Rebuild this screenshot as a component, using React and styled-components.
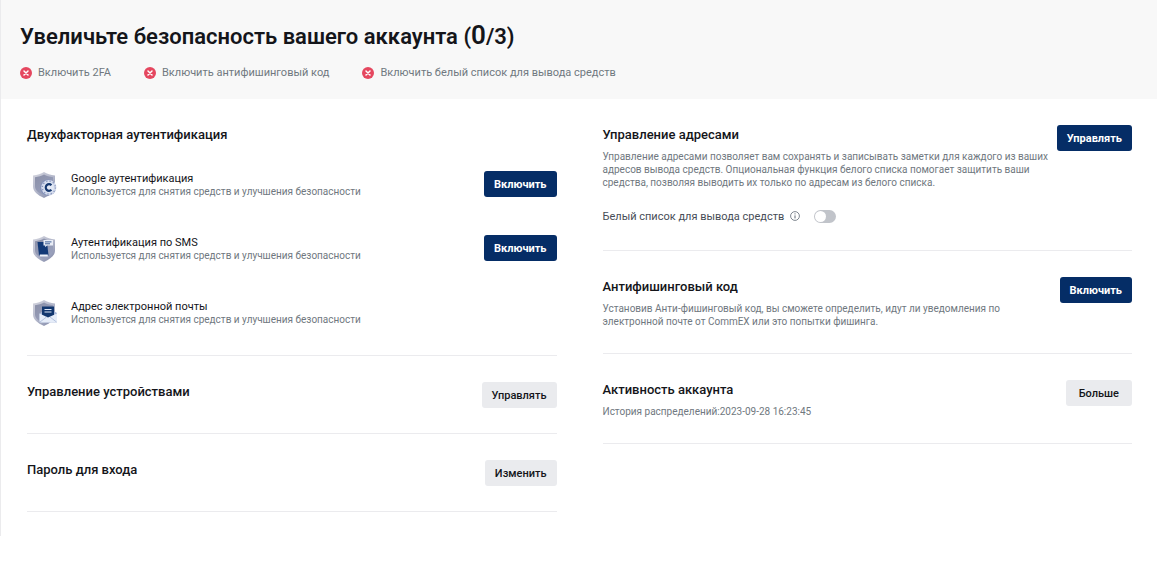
import React, { useState } from "react";
import styled, { createGlobalStyle } from "styled-components";

const checks = [
  "Включить 2FA",
  "Включить антифишинговый код",
  "Включить белый список для вывода средств",
];

const methods = [
  { id: "google", name: "Google аутентификация", action: true },
  { id: "sms", name: "Аутентификация по SMS", action: true },
  { id: "email", name: "Адрес электронной почты", action: false },
];

const CrossIcon = () => (
  <svg width="12" height="12" viewBox="0 0 12 12" aria-hidden="true">
    <circle cx="6" cy="6" r="6" fill="#e5475f" />
    <path d="M4 4l4 4M8 4l-4 4" stroke="#fff" strokeWidth="1.5" strokeLinecap="round" />
  </svg>
);

const InfoIcon = () => (
  <svg width="10" height="10" viewBox="0 0 10 10" fill="none" aria-hidden="true">
    <circle cx="5" cy="5" r="4.4" stroke="#5f6873" strokeWidth="0.8" />
    <path d="M5 4.4v3" stroke="#5f6873" />
    <path d="M5 2.4v1" stroke="#5f6873" />
  </svg>
);

const MethodIcon = ({ type }) => (
  <svg width="26" height="28" viewBox="0 0 26 28" fill="none" aria-hidden="true">
    <defs>
      <linearGradient id={`rim-${type}`} x1="2" y1="2" x2="24" y2="26" gradientUnits="userSpaceOnUse">
        <stop stopColor="#d3d4de" />
        <stop offset="0.5" stopColor="#b3b7ca" />
        <stop offset="1" stopColor="#7e86a6" />
      </linearGradient>
      <linearGradient id={`core-${type}`} x1="5" y1="4" x2="20" y2="24" gradientUnits="userSpaceOnUse">
        <stop stopColor="#8b90a8" />
        <stop offset="1" stopColor="#9ba3c0" />
      </linearGradient>
    </defs>
    <path
      d="M13 1c3 2 6.500 3 11 3.500v11c0 5-4.500 8.500-11 11.500C6.500 24 2 20.500 2 15.500v-11C6.500 4 10 3 13 1z"
      fill={`url(#rim-${type})`}
    />
    <path
      d="M13 3.500c2.500 1.500 5.500 2.300 9 2.700v9c0 4-3.500 6.800-9 9.300-5.500-2.500-9-5.300-9-9.300v-9c3.500-.4 6.500-1.200 9-2.700z"
      fill={`url(#core-${type})`}
    />
    {type === "google" && (
      <>
        <circle cx="17" cy="16.500" r="8" fill="#8391b8" />
        <circle cx="17.800" cy="16.500" r="7.600" fill="#d5dced" />
        <circle cx="17.800" cy="16.500" r="6.500" stroke="#8795bb" strokeWidth="1.300" strokeDasharray="1.200 2.200" />
        <circle cx="17.800" cy="16.500" r="5" fill="#e3e9f5" />
        <path d="M20.400 14.200a3.300 3.300 0 1 0 0 4.600" stroke="#16386f" strokeWidth="2.200" />
      </>
    )}
    {type === "sms" && (
      <>
        <path d="M6.500 7h9.500l1.500 13.500h-9.500z" fill="#123977" />
        <path d="M8.800 20.500h8" stroke="#eef2fa" strokeWidth="2" />
        <path d="M12.500 5H22v5.500h-6l-1.800 1.800v-1.800h-1.700z" fill="#e9edf6" />
        <path d="M14 6.900h6.500M14 8.800h5" stroke="#2a4f8c" strokeWidth="0.900" />
      </>
    )}
    {type === "email" && (
      <>
        <path d="M8.500 14.500l8.500-6 9 5.500v8.500a1 1 0 0 1-1 1H10a1.500 1.500 0 0 1-1.500-1.500z" fill="#a9b7d6" />
        <path d="M11 7.500h12v10l-6 2-6-2z" fill="#12376f" />
        <path d="M13.500 10.500h7M13.500 13h7" stroke="#dce5f5" strokeWidth="1.100" />
        <path d="M8.500 14.500l8.500 4 9-4v8a1 1 0 0 1-1 1H10a1.500 1.500 0 0 1-1.500-1.500z" fill="#e6edf9" />
        <path d="M9 23l6.500-5M25.500 23L19 18" stroke="#9fb0d2" strokeWidth="0.700" />
      </>
    )}
  </svg>
);

const App = () => {
  const [whitelist, setWhitelist] = useState(false);

  return (
    <>
      <GlobalStyle />
      <Page>
        <Header>
          <Title>
            Увеличьте безопасность вашего аккаунта (<big>0</big>/3)
          </Title>
          <CheckList>
            {checks.map((check) => (
              <li key={check}>
                <CrossIcon />
                {check}
              </li>
            ))}
          </CheckList>
        </Header>
        <Columns>
          <div>
            <Section>
              <Heading>Двухфакторная аутентификация</Heading>
              <MethodList>
                {methods.map((method) => (
                  <Method key={method.id}>
                    <MethodIcon type={method.id} />
                    <div className="text">
                      <h3>{method.name}</h3>
                      <p>Используется для снятия средств и улучшения безопасности</p>
                    </div>
                    {method.action && <Button $primary>Включить</Button>}
                  </Method>
                ))}
              </MethodList>
            </Section>
            <Section>
              <Row>
                <Heading>Управление устройствами</Heading>
                <Button>Управлять</Button>
              </Row>
            </Section>
            <Section>
              <Row>
                <Heading>Пароль для входа</Heading>
                <Button>Изменить</Button>
              </Row>
            </Section>
          </div>
          <div>
            <Section>
              <Row>
                <div>
                  <Heading>Управление адресами</Heading>
                  <Description>
                    Управление адресами позволяет вам сохранять и записывать заметки для каждого из
                    ваших адресов вывода средств. Опциональная функция белого списка помогает
                    защитить ваши средства, позволяя выводить их только по адресам из белого списка.
                  </Description>
                </div>
                <Button $primary>Управлять</Button>
              </Row>
              <Whitelist>
                <label htmlFor="whitelist">Белый список для вывода средств</label>
                <InfoIcon />
                <Switch
                  id="whitelist"
                  type="checkbox"
                  role="switch"
                  checked={whitelist}
                  onChange={() => setWhitelist(!whitelist)}
                />
              </Whitelist>
            </Section>
            <Section>
              <Row>
                <div>
                  <Heading>Антифишинговый код</Heading>
                  <Description>
                    Установив Анти-фишинговый код, вы сможете определить, идут ли уведомления по
                    электронной почте от CommEX или это попытки фишинга.
                  </Description>
                </div>
                <Button $primary>Включить</Button>
              </Row>
            </Section>
            <Section>
              <Row>
                <div>
                  <Heading>Активность аккаунта</Heading>
                  <Description>История распределений:2023-09-28 16:23:45</Description>
                </div>
                <Button $wide>Больше</Button>
              </Row>
            </Section>
          </div>
        </Columns>
      </Page>
    </>
  );
};

const GlobalStyle = createGlobalStyle`
  * {
    box-sizing: border-box;
    margin: 0;
    padding: 0;
  }

  body {
    background: #fff;
    color: #14151a;
    font-family: Roboto, "Liberation Sans", sans-serif;
  }
`;

const Page = styled.main`
  border-left: 1px solid #ebebed;
  padding-bottom: 24px;
`;

const Header = styled.header`
  padding: 21px 19px 19px;
  background: #f8f8f8;
`;

const Title = styled.h1`
  font-size: 22px;
  font-weight: 600;
  line-height: 32px;

  big {
    font-size: 26px;
    line-height: 1;
  }
`;

const CheckList = styled.ul`
  display: flex;
  flex-wrap: wrap;
  gap: 8px 33px;
  margin-top: 12px;
  list-style: none;
  color: #707880;
  font-size: 11px;
  line-height: 15px;

  li {
    display: flex;
    align-items: center;
    gap: 6px;
  }
`;

const Columns = styled.div`
  display: grid;
  grid-template-columns: 1fr 1fr;
  gap: 46px;
  padding: 0 25px 0 26px;
`;

const Section = styled.section`
  padding: 26px 0 25px;
  border-bottom: 1px solid #ebebee;
`;

const Heading = styled.h2`
  font-size: 13px;
  font-weight: 500;
  line-height: 20px;
`;

const Row = styled.div`
  display: flex;
  justify-content: space-between;
  gap: 6px;
`;

const Description = styled.p`
  max-width: 450px;
  margin-top: 5px;
  color: #707880;
  font-size: 10px;
  line-height: 13px;
`;

const MethodList = styled.div`
  display: grid;
  gap: 36px;
  padding: 26px 0 3px;
`;

const Method = styled.div`
  display: flex;
  align-items: center;
  gap: 14px;
  padding-left: 4px;

  .text {
    flex: 1;
  }

  h3 {
    font-size: 11px;
    font-weight: 400;
    line-height: 14px;
  }

  p {
    color: #707880;
    font-size: 10px;
    line-height: 12px;
  }
`;

const Button = styled.button`
  flex: none;
  align-self: flex-start;
  height: 26px;
  padding: 0 ${(props) => (props.$wide ? "13px" : "10px")};
  border: none;
  border-radius: 3px;
  background: ${(props) => (props.$primary ? "#052d66" : "#eaebee")};
  color: ${(props) => (props.$primary ? "#fff" : "#14151a")};
  font-family: inherit;
  font-size: 11px;
  font-weight: ${(props) => (props.$primary ? 700 : 500)};
  cursor: pointer;
`;

const Whitelist = styled.div`
  display: flex;
  align-items: center;
  gap: 6px;
  height: 18px;
  margin-top: 18px;
  color: #474d57;
  font-size: 11px;
`;

const Switch = styled.input`
  appearance: none;
  display: flex;
  align-items: center;
  width: 22px;
  height: 13px;
  margin-left: 8px;
  padding: 0 1px;
  border-radius: 7px;
  background: #c1c4ca;
  cursor: pointer;

  &::before {
    content: "";
    width: 11px;
    height: 11px;
    border-radius: 50%;
    background: #fff;
  }

  &:checked {
    justify-content: flex-end;
    background: #052d66;
  }
`;

export default App;
